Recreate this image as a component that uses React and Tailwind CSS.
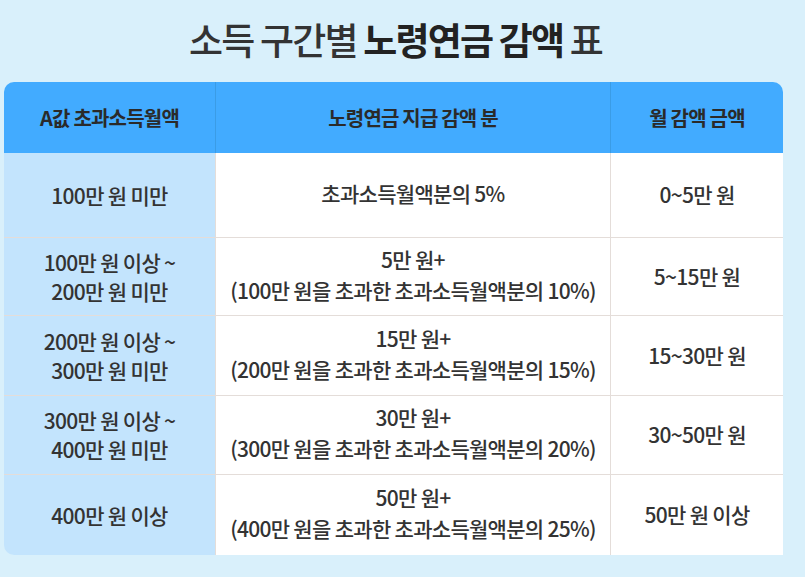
import React from "react";

const rows = [
  { range: ["100만 원 미만"], cut: ["초과소득월액분의 5%"], amount: "0~5만 원", h: "h-[85px]" },
  {
    range: ["100만 원 이상 ~", "200만 원 미만"],
    cut: ["5만 원+", "(100만 원을 초과한 초과소득월액분의 10%)"],
    amount: "5~15만 원",
    h: "h-[78px]",
  },
  {
    range: ["200만 원 이상 ~", "300만 원 미만"],
    cut: ["15만 원+", "(200만 원을 초과한 초과소득월액분의 15%)"],
    amount: "15~30만 원",
    h: "h-[80px]",
  },
  {
    range: ["300만 원 이상 ~", "400만 원 미만"],
    cut: ["30만 원+", "(300만 원을 초과한 초과소득월액분의 20%)"],
    amount: "30~50만 원",
    h: "h-[79px]",
  },
  {
    range: ["400만 원 이상"],
    cut: ["50만 원+", "(400만 원을 초과한 초과소득월액분의 25%)"],
    amount: "50만 원 이상",
    h: "h-[80px]",
  },
];

function Lines({ lines, lead = "leading-[29px]" }) {
  return (
    <div className={`flex flex-col items-center ${lead}`}>
      {lines.map((l) => (
        <span key={l} className="whitespace-nowrap">{l}</span>
      ))}
    </div>
  );
}

export default function App() {
  return (
    <div
      className="w-[805px] h-[577px] bg-[#d9f0fb] text-[#333] overflow-hidden"
      style={{ fontFamily: '"Noto Sans CJK KR", "Noto Sans", sans-serif' }}
    >
      <h1 className="h-[82px] flex items-center justify-center pb-[3px] pr-[14px] text-[37px] tracking-[-1.8px] text-[#333] font-medium">
        소득 구간별&nbsp;<span className="font-bold text-[#222]">노령연금 감액</span>&nbsp;표
      </h1>

      <div className="ml-[4px] w-[779px]">
        {/* header */}
        <div className="grid grid-cols-[212px_395px_172px] h-[71px] bg-[#42abff] rounded-t-[10px] text-[20px] font-bold text-[#2a2a2a] tracking-[-0.8px]">
          <div className="flex items-center justify-center border-r border-[#3a9ce6]">A값 초과소득월액</div>
          <div className="flex items-center justify-center border-r border-[#3a9ce6]">노령연금 지급 감액 분</div>
          <div className="flex items-center justify-center">월 감액 금액</div>
        </div>

        {/* body */}
        {rows.map((r, i) => (
          <div
            key={i}
            className={`grid grid-cols-[212px_395px_172px] ${r.h} text-[21px] font-medium tracking-[-0.7px] ${
              i < rows.length - 1 ? "border-b border-[#e4ddd9]" : ""
            }`}
          >
            <div
              className={`flex items-center justify-center bg-[#c3e4fd] border-r border-[#e4ddd9] ${
                i === rows.length - 1 ? "rounded-bl-[10px]" : ""
              }`}
            >
              <Lines lines={r.range} />
            </div>
            <div className="flex items-center justify-center pb-[4px] bg-white border-r border-[#e4ddd9]">
              <Lines lines={r.cut} lead="leading-[31px]" />
            </div>
            <div className="flex items-center justify-center bg-white">{r.amount}</div>
          </div>
        ))}
      </div>
    </div>
  );
}
